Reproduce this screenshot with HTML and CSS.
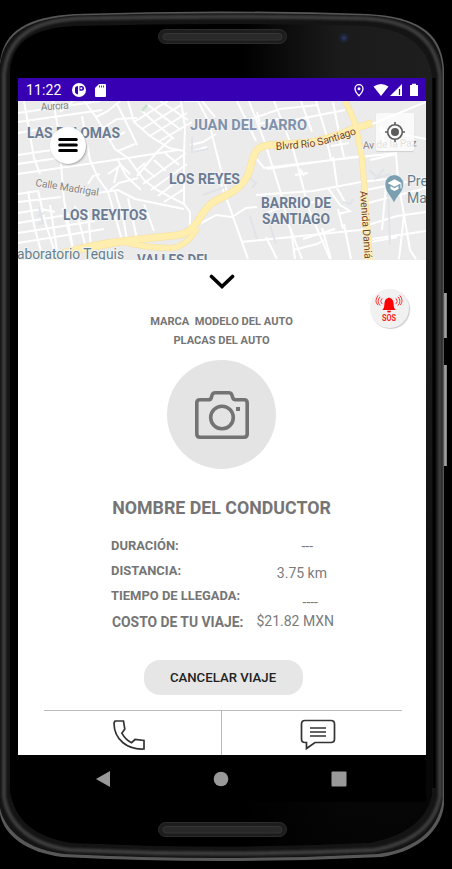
FILE: index.html
```html
<!DOCTYPE html>
<html lang="es">
<head>
<meta charset="utf-8">
<title>Viaje</title>
<link rel="stylesheet" href="styles.css">
</head>
<body>
<div class="phone">
  <svg class="frame" viewBox="0 0 452 869" aria-hidden="true">
    <defs>
      <linearGradient id="glass" x1="0" x2="1" y1="0" y2="0"><stop offset=".55" stop-color="#000"/><stop offset=".78" stop-color="#1b1b1b"/><stop offset="1" stop-color="#1e1e1e"/></linearGradient>
      <linearGradient id="fade" x1="0" x2="0" y1="0" y2="1"><stop offset="0" stop-color="#000" stop-opacity="0"/><stop offset=".4" stop-color="#000" stop-opacity=".1"/><stop offset=".85" stop-color="#000" stop-opacity=".7"/><stop offset="1" stop-color="#000" stop-opacity=".85"/></linearGradient>
      <linearGradient id="key" x1="0" x2="1" y1="0" y2="0"><stop offset="0" stop-color="#555"/><stop offset=".5" stop-color="#aaa"/><stop offset="1" stop-color="#777"/></linearGradient>
      <radialGradient id="lens"><stop offset="0" stop-color="#303d68"/><stop offset=".5" stop-color="#1d2338"/><stop offset="1" stop-color="#1a1a1c"/></radialGradient>
      <filter id="soft" x="-5%" y="-5%" width="110%" height="110%"><feGaussianBlur stdDeviation="1.200"/></filter>
    </defs>
    <path d="M443 293h4v45h-4zM443 365h4v101h-4z" fill="url(#key)"/>
    <path d="M0 62C4 30 28 17 75 14Q222 9 368 14C415 17 441 30 444 68V805C440 836 412 852 382 857Q222 865 62 857C25 852 4 835 0 814Z" fill="#585858"/>
    <path d="M0 64C5 32 29 19 75 15.500Q222 11 368 15.500C413 18 439 32 442.500 68V800C438 834 410 850 378 854Q222 862 64 854C29 850 5 832 0 808Z" fill="#141414"/>
    <path d="M4 75C7 38 31 21 78 18.500Q222 15 366 18.500C408 21 435 36 440 75V796C434 829 408 844 374 850Q222 857 70 850C32 845 8 825 4 796Z" fill="none" stroke="#3c3c3c" stroke-width="4" filter="url(#soft)"/>
    <path d="M10 70C13 43 30 28 75 26Q222 22 365 26C402 29 427 42 432 76V796C426 821 405 836 370 843Q222 850 73 843C35 838 14 820 10 790Z" fill="url(#glass)"/>
    <path d="M10 70C13 43 30 28 75 26Q222 22 365 26C402 29 427 42 432 76V796C426 821 405 836 370 843Q222 850 73 843C35 838 14 820 10 790Z" fill="url(#fade)"/>
    <path d="M434 78v710" stroke="#000" stroke-width="3"/>
    <g id="speaker"><rect x="158.500" y="29.500" width="128" height="14" rx="7" fill="#1d1d1d" stroke="#2c2c2c"/><rect x="163" y="33.500" width="119" height="6.500" rx="3.200" fill="#292929" stroke="#353535"/></g>
    <use href="#speaker" y="793"/>
    <circle cx="344" cy="38" r="6" fill="url(#lens)"/>
  </svg>

  <main class="screen">
    <header class="status">
      <span class="clock">11:22</span>
      <svg class="s-app" viewBox="0 0 14 14"><circle cx="7" cy="7" r="7" fill="#fff"/><path d="M3 4.500Q4 3 6 3v8.500Q3.800 11 3 9.500ZM7.500 3h2.200a2.400 2.400 0 0 1 0 4.800H7.500Z" fill="#3700b3"/><circle cx="9.300" cy="5.300" r="1.100" fill="#fff"/></svg>
      <svg class="s-sd" viewBox="0 0 11 13"><path d="M4 0h6q1 0 1 1v11q0 1-1 1H1q-1 0-1-1V4Z" fill="#fff"/><path d="M4.500 1.500v2M6.500 1.500v2M8.500 1.500v2" stroke="#3700b3" stroke-width=".8"/></svg>
      <svg class="s-right" viewBox="0 0 66 14"><path d="M6 1.700C3.500 1.700 2 3.500 2 5.700c0 2.800 4 7 4 7s4-4.200 4-7c0-2.200-1.500-4-4-4Z" fill="none" stroke="#fff" stroke-width="1.300"/><circle cx="6" cy="5.700" r="1.500" fill="#fff"/><path d="M20.500 3.500Q28-1.500 35.500 3.500L28 13Z" fill="#fff"/><path d="M37 13 49 1V13Z" fill="#fff"/><path d="M46.500 6v6" stroke="#3700b3" stroke-width="1.200"/><path d="M57 2h2V.8h4V2h2v11h-8Z" fill="#fff"/></svg>
    </header>

    <section class="map">
      <svg class="map-art" viewBox="18 101 408 159">
        <rect x="18" y="101" width="408" height="159" fill="#ebebeb"/>
        <g fill="none" stroke="#fff" stroke-width="2">
          <path d="M18 113 100 101M18 122 102 110M18 133 52 127M18 155 72 147M18 164 58 158M18 174 128 158 178 150M40 174 34 158 24 101M53 101 58 128 64 200 75 259M73 101 60 112M82 116 90 160 98 178 108 192 122 240"/>
          <path d="M84 101 96 117 115 149 128 158 144 180 157 190 184 204 190 212 190 229M96 117 108 111 120 101M103 128 117 119 137 118M110 140 125 132M117 104 130 130 137 145M118 151 135 144"/>
          <path d="M128 101 134 122 150 136 169 148 184 151M134 122 168 101M142 129 181 105M150 136 187 113M158 142 192 122M141 110 155 123 174 139M148 105 181 130M160 101 188 120M181 101 185 127 184 155 184 205"/>
          <path d="M184 101 198 101 209 122 216 151 228 196M190 145 203 142 216 134M191 152 207 147M202 101 215 117M137 176 157 152 173 137M143 184 186 153M151 190 187 164M158 196 185 175M164 202 184 189M144 168 155 177M154 160 166 171M165 153 179 165M137 170 145 163"/>
          <path d="M18 194 38 191M18 202 61 197M18 213 42 209 55 212M18 223 85 212M18 233 95 221M18 243 104 229M28 191 34 225 43 259M38 190 45 222 56 255M50 205 57 250M63 208 73 250M75 206 86 248M88 211 91 248"/>
          <path d="M83 195 118 190 135 199 184 209M115 191 124 222 127 240M128 198 137 239M144 204 154 231M110 190 119 183 138 178M108 174 121 165 130 174M114 183 118 168M88 184 93 176 100 174M117 158 126 176 141 190M190 229 216 215 232 217 246 208 257 207"/>
          <path d="M232 213 224 193 218 173M227 200 248 259M241 242 370 229M254 156 264 168 350 158 397 153M267 169 353 157 396 154 398 179M237 101 256 141M249 101 264 140 280 190 288 223 302 259M274 101 294 152 309 210 330 259"/>
          <path d="M251 119 280 109 318 105M270 126 299 119 345 110M257 112 260 124 278 119M301 101 312 132M316 101 327 137M333 102 339 133M256 195 313 191 361 182 395 178M266 213 285 206 329 200M295 175 308 173M300 169 304 176"/>
          <path d="M326 138 331 159M339 135 344 157M331 146 349 143M333 157 337 185M328 188 340 205 350 211 338 214M337 188 346 204M338 209 343 229M366 190 426 178M368 203 426 188M368 225 397 216 426 212M398 180 404 215 399 259M404 215 410 250 416 259M372 239 426 231M379 130 426 139M370 125 426 102M381 126 385 151M370 160 397 154M386 185 382 230"/>
          <path d="M266 237 277 259M291 229 295 259M303 239 335 229M293 250 317 244 324 240M322 228 331 259M344 224 351 259M366 243 397 237"/>
        </g>
        <g fill="none" stroke="#e0e3e8" stroke-width="2"><path d="M39 207 43 223 38 224M44 213 38 216M192 137 192 152 208 149M203 195 225 187M250 216 257 239M270 225 276 244M369 170 377 177 384 169M374 179 390 174M388 183 390 245M252 188 256 183 248 177M343 202 350 204 353 199"/></g>
        <path d="m142 111 5-6" stroke="#c3e4c8" stroke-width="2.500"/>
        <g fill="none" stroke="#f5dfa0" stroke-linejoin="round">
          <path d="M50 259Q70 248 123 241L179 235Q190 233 198 221C207 205 212 202 225 196Q242 188 248 175C254 158 252 146 270 145L303 143Q322 142 353 129L372 123" stroke-width="7.500"/>
          <path d="M80 250 123 242Q147 248 172 248 187 246 197 228M345 101Q354 118 356 127L362 158 365 195 370 260" stroke-width="6"/>
        </g>
        <g fill="none" stroke="#ffeead" stroke-linejoin="round">
          <path d="M50 259Q70 248 123 241L179 235Q190 233 198 221C207 205 212 202 225 196Q242 188 248 175C254 158 252 146 270 145L303 143Q322 142 353 129L372 123" stroke-width="6.500"/>
          <path d="M80 250 123 242Q147 248 172 248 187 246 197 228M345 101Q354 118 356 127L362 158 365 195 370 260" stroke-width="5"/>
        </g>
        <g class="m-area">
          <text x="27" y="138" textLength="93" lengthAdjust="spacingAndGlyphs">LAS PALOMAS</text>
          <text x="190" y="130" textLength="117" lengthAdjust="spacingAndGlyphs" class="m-light">JUAN DEL JARRO</text>
          <text x="169" y="183.500" textLength="71" lengthAdjust="spacingAndGlyphs">LOS REYES</text>
          <text x="63" y="220" textLength="84" lengthAdjust="spacingAndGlyphs">LOS REYITOS</text>
          <text x="261" y="207.500" textLength="70" lengthAdjust="spacingAndGlyphs">BARRIO DE</text>
          <text x="262" y="224" textLength="68" lengthAdjust="spacingAndGlyphs">SANTIAGO</text>
          <text x="137" y="265" textLength="74" lengthAdjust="spacingAndGlyphs">VALLES DEL</text>
        </g>
        <g class="m-street">
          <text x="41" y="110.500" transform="rotate(-4 41 110)" textLength="28">Aurora</text>
          <text x="35" y="186" transform="rotate(9 35 186)" textLength="64">Calle Madrigal</text>
          <text x="363" y="149" transform="rotate(-3 363 149)" textLength="54">Av de la Paz</text>
        </g>
        <path id="blvd" d="M276 150 302 148Q322 147 362 132" fill="none"/>
        <text class="m-road"><textPath href="#blvd" textLength="83">Blvrd Río Santiago</textPath></text>
        <text class="m-road" x="360" y="191" transform="rotate(86 360 191)" textLength="68">Avenida Damiá</text>
        <text class="m-poi" x="17" y="259" textLength="107" lengthAdjust="spacingAndGlyphs">aboratorio Tequis</text>
        <text class="m-poi" x="407" y="186">Pre</text>
        <text class="m-poi" x="407" y="202.500">Ma</text>
        <path d="M394 203C390 195 385 192 385 184a9.300 9.300 0 0 1 18.600 0c0 8-6 11-9.600 19Z" fill="#7a9fb0" stroke="#f4f7f8" stroke-width=".6"/>
        <path d="m387.500 183 7-3.800 7 3.800-7 3.800ZM390.500 186l4 2.200 4-2.200v3l-4 2-4-2ZM400.500 183.500h1v5h-1Z" fill="#fff"/>
      </svg>
      <button class="menu" aria-label="Menú"><svg viewBox="0 0 20 16"><path d="M1.700 2.500h16.600M1.700 8h16.600M1.700 13.500h16.600" stroke="#000" stroke-width="3" stroke-linecap="round"/></svg></button>
      <button class="locate" aria-label="Mi ubicación"><svg viewBox="0 0 22 22"><circle cx="11" cy="11" r="7.300" fill="none" stroke="#5c5c5c" stroke-width="1.600"/><circle cx="11" cy="11" r="4" fill="#5c5c5c"/><path d="M11 1v3M11 18v3M1 11h3M18 11h3" stroke="#5c5c5c" stroke-width="1.600"/></svg></button>
    </section>

    <section class="sheet">
      <svg class="chevron" viewBox="0 0 26 16"><path d="m2.500 2.500 10.500 10 10.500-10" fill="none" stroke="#000" stroke-width="3.600" stroke-linecap="round"/></svg>
      <button class="sos" aria-label="Emergencia"><svg viewBox="0 0 40 40">
        <path d="M12.500 21.500c2.500-2 2-5 2.500-8 .4-2.600 2-4 3.500-4.300a1.500 1.500 0 0 1 2 0c1.500.3 3.100 1.700 3.500 4.300.5 3 0 6 2.500 8ZM17.500 22.200h4a2 2 0 0 1-4 0Z" fill="red"/>
        <path d="M12.500 9.500q-3 3 0 6M10.300 8q-4 4.500 0 9M8.500 6.500q-4.500 5.500-.5 10M26.500 9.500q3 3 0 6M28.700 8q4 4.500 0 9M30.500 6.500q4.500 5.500.5 10" fill="none" stroke="#f33" stroke-width="1"/>
        <text x="12.300" y="32.500" textLength="14.500" lengthAdjust="spacingAndGlyphs">SOS</text></svg></button>
      <p class="car">MARCA&nbsp; MODELO DEL AUTO<br>PLACAS DEL AUTO</p>
      <div class="avatar"><svg viewBox="0 0 54 48"><path d="M5 8.800h8.500q2 0 2.700-2l1-3q.8-2 3-2h13.600q2.200 0 3 2l1 3q.7 2 2.700 2H49q3.200 0 3.200 3.200v31q0 3.200-3.200 3.200H5q-3.200 0-3.200-3.200V12q0-3.200 3.200-3.200Z"/><circle cx="27" cy="26.500" r="11.300"/><path class="dot" d="M41 16h4v4h-4Z"/></svg></div>
      <h1>NOMBRE DEL CONDUCTOR</h1>
      <div class="trip">
        <dl class="labels"><dt>DURACIÓN:</dt><dt>DISTANCIA:</dt><dt>TIEMPO DE LLEGADA:</dt><dt class="cost">COSTO DE TU VIAJE:</dt></dl>
        <div class="values"><span class="v-duration">---</span><span class="v-distance">3.75 km</span><span class="v-arrival">----</span><span class="v-cost">$21.82 MXN</span></div>
      </div>
      <button class="cancel">CANCELAR VIAJE</button>
      <div class="actions">
        <button aria-label="Llamar"><svg class="i-call" viewBox="0 0 32 30"><path d="M2 1h8.500l1.300 8-3 4.200q4 7 9.700 9.500L22 19.500l9 1V29C15 30 1 20 1 3Z"/></svg></button>
        <button class="chat" aria-label="Mensaje"><svg class="i-chat" viewBox="0 0 36 32"><path d="M5 1.500h26q3.500 0 3.500 3.500v15q0 3.500-3.500 3.500H15l-8.500 6v-6H5Q1.500 23.500 1.500 20V5Q1.500 1.500 5 1.500Z"/><path d="M10 9h16M10 13h16M10 17h16"/></svg></button>
      </div>
    </section>

    <nav class="navbar">
      <svg viewBox="0 0 16 16"><path d="M1 8 15 0v16Z"/></svg>
      <svg viewBox="0 0 16 16"><circle cx="8" cy="8" r="7.300"/></svg>
      <svg viewBox="0 0 16 16"><rect x=".5" y=".5" width="15" height="15" rx="1"/></svg>
    </nav>
  </main>
</div>
</body>
</html>
```
FILE: styles.css
```css
* { box-sizing: border-box; }
body { margin: 0; background: #000; font-family: Roboto, "Liberation Sans", sans-serif; }
button { border: 0; padding: 0; background: none; font: inherit; }
svg { display: block; }
.phone { position: relative; width: 452px; height: 869px; padding: 78px 26px 67px 18px; overflow: hidden; }
.frame { position: absolute; inset: 0; width: 452px; height: 869px; }
.screen { position: relative; width: 408px; }

.status { height: 23px; display: flex; align-items: center; padding: 1px 7px 0 8px; background: #3700b3; color: #fff; }
.clock { width: 46px; font-size: 14px; letter-spacing: .1px; }
.s-app { width: 14px; height: 14px; }
.s-sd { width: 11px; height: 13px; margin-left: 9px; }
.s-right { width: 66px; height: 14px; margin-left: auto; }

.map { position: relative; height: 159px; overflow: hidden; }
.map-art { width: 408px; height: 159px; }
.m-area { font-size: 14px; font-weight: 700; fill: #6b7b93; stroke: #f4f4f4; stroke-width: 1.500px; paint-order: stroke; }
.m-light { fill: #8091ab; }
.m-street { font-size: 10.500px; fill: #858585; stroke: #f2f2f2; stroke-width: 1.500px; paint-order: stroke; }
.m-road { font-size: 10.500px; fill: #76451f; stroke: #fff3cf; stroke-width: 1px; paint-order: stroke; }
.m-poi { font-size: 14px; fill: #65808c; stroke: #f4f4f4; stroke-width: 2px; paint-order: stroke; }
.menu { position: absolute; left: 32px; top: 26px; width: 36px; height: 37px; border-radius: 50%; background: #fff; box-shadow: 1px 1px 2px #aaa; display: grid; place-items: center; }
.menu svg { width: 20px; height: 16px; margin: -1px 1px 0 0; }
.locate { position: absolute; left: 358px; top: 12px; width: 38px; height: 38px; border-radius: 2px; background: rgba(255,255,255,.75); box-shadow: 0 1px 1px rgba(0,0,0,.12); display: grid; place-items: center; }
.locate svg { width: 22px; height: 22px; }

.sheet { position: relative; height: 495px; padding-left: 1px; background: #fff; color: #757575; display: flex; flex-direction: column; align-items: center; }
.chevron { width: 26px; height: 16px; margin: 14px 1px 0 0; flex: none; }
.sos { position: absolute; left: 352px; top: 29px; width: 39px; height: 39px; border-radius: 50%; background: #f1f1f1; box-shadow: 1px 1px 1px #ccc; }
.sos svg { width: 39px; height: 39px; }
.sos text { font-size: 9px; font-weight: 700; fill: #f22; }
.car { margin: 21.500px 2px 0 0; font-size: 11.100px; line-height: 19px; font-weight: 700; text-align: center; }
.avatar { width: 109px; height: 109px; margin: 10.500px 2px 0 0; border-radius: 50%; background: #e4e4e4; display: grid; place-items: center; flex: none; }
.avatar svg { width: 54px; height: 48px; fill: none; stroke: #737373; stroke-width: 3.600px; }
.avatar .dot { fill: #737373; stroke: none; }
h1 { margin: 28px 2px 0 0; font-size: 17.800px; line-height: 22px; font-weight: 700; white-space: nowrap; }
.trip { width: 223px; height: 100px; margin-top: 14px; display: flex; }
.labels { margin: 0; width: 146px; font-size: 12.950px; font-weight: 700; white-space: nowrap; }
.labels dt { height: 25px; line-height: 25px; }
.labels .cost { padding-left: 1px; height: 28px; line-height: 29px; font-size: 13.850px; }
.values { width: 77px; display: flex; flex-direction: column; align-items: flex-end; font-size: 14px; white-space: nowrap; color: #7b7b7b; }
.values span { flex: none; }
.v-duration { height: 26px; line-height: 26px; padding-right: 21px; }
.v-distance { height: 28px; line-height: 28px; padding-right: 7px; }
.v-arrival { height: 14px; line-height: 31px; padding-right: 16px; }
.values .v-cost { margin-top: 11.500px; line-height: 16px; }
.cancel { width: 159px; height: 35px; margin: 27px 0 0 1px; border-radius: 16px; background: #e6e6e6; color: #222; font-size: 13.200px; font-weight: 500; flex: none; }
.actions { width: 358px; height: 45px; margin-top: auto; display: grid; grid-template-columns: 177px 181px; border-top: 1px solid #bbb; flex: none; }
.actions button { display: flex; justify-content: center; }
.actions .chat { border-left: 1px solid #bbb; }
.actions svg { fill: none; stroke: #333; stroke-width: 1.700px; }
.i-call { width: 32px; height: 30px; margin: 9px 0 0 -6px; }
.i-chat { width: 36px; height: 32px; margin: 8px 0 0 13px; }

.navbar { height: 47px; background: #000; display: flex; justify-content: space-between; align-items: center; padding: 0 79px 0 77px; }
.navbar svg { width: 16px; height: 16px; fill: #999; }
```
